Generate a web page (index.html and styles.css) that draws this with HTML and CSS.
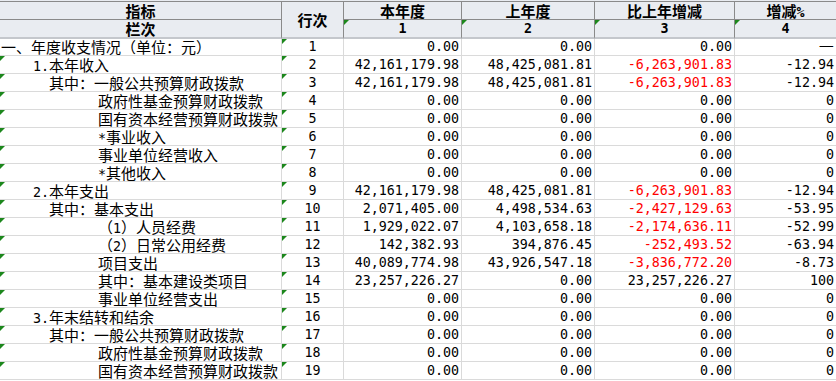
FILE: index.html
```html
<!DOCTYPE html>
<html lang="zh-CN">
<head>
<meta charset="utf-8">
<title>收入支出决算表</title>
<link rel="stylesheet" href="styles.css">
</head>
<body>
<div class="sheet">
<table class="grid">
<colgroup><col class="c-name"><col class="c-no"><col class="c-cur"><col class="c-prev"><col class="c-diff"><col class="c-pct"></colgroup>
<thead>
<tr class="h1"><th>指标</th><th class="hno" rowspan="2">行次</th><th>本年度</th><th>上年度</th><th>比上年增减</th><th class="last">增减<span class="a">%</span></th></tr>
<tr class="h2"><th>栏次</th><th class="t hd">1</th><th class="t hd">2</th><th class="t hd">3</th><th class="t hd last">4</th></tr>
</thead>
<tbody>
<tr class="first"><td class="lbl l0">一、年度收支情况（单位：元）</td><td class="no t">1</td><td class="num">0.00</td><td class="num">0.00</td><td class="num">0.00</td><td class="num last"><span class="dash">—</span></td></tr>
<tr><td class="lbl l1 t"><span class="a">1.</span>本年收入</td><td class="no t">2</td><td class="num">42,161,179.98</td><td class="num">48,425,081.81</td><td class="num neg">-6,263,901.83</td><td class="num last">-12.94</td></tr>
<tr><td class="lbl l2 t">其中：一般公共预算财政拨款</td><td class="no t">3</td><td class="num">42,161,179.98</td><td class="num">48,425,081.81</td><td class="num neg">-6,263,901.83</td><td class="num last">-12.94</td></tr>
<tr><td class="lbl l3 t">政府性基金预算财政拨款</td><td class="no t">4</td><td class="num">0.00</td><td class="num">0.00</td><td class="num">0.00</td><td class="num last">0</td></tr>
<tr><td class="lbl l3 t">国有资本经营预算财政拨款</td><td class="no t">5</td><td class="num">0.00</td><td class="num">0.00</td><td class="num">0.00</td><td class="num last">0</td></tr>
<tr><td class="lbl l3 t"><span class="a">*</span>事业收入</td><td class="no t">6</td><td class="num">0.00</td><td class="num">0.00</td><td class="num">0.00</td><td class="num last">0</td></tr>
<tr><td class="lbl l3 t">事业单位经营收入</td><td class="no t">7</td><td class="num">0.00</td><td class="num">0.00</td><td class="num">0.00</td><td class="num last">0</td></tr>
<tr><td class="lbl l3 t"><span class="a">*</span>其他收入</td><td class="no t">8</td><td class="num">0.00</td><td class="num">0.00</td><td class="num">0.00</td><td class="num last">0</td></tr>
<tr><td class="lbl l1 t"><span class="a">2.</span>本年支出</td><td class="no t">9</td><td class="num">42,161,179.98</td><td class="num">48,425,081.81</td><td class="num neg">-6,263,901.83</td><td class="num last">-12.94</td></tr>
<tr><td class="lbl l2 t">其中：基本支出</td><td class="no t">10</td><td class="num">2,071,405.00</td><td class="num">4,498,534.63</td><td class="num neg">-2,427,129.63</td><td class="num last">-53.95</td></tr>
<tr><td class="lbl l3 t">（<span class="a">1</span>）人员经费</td><td class="no t">11</td><td class="num">1,929,022.07</td><td class="num">4,103,658.18</td><td class="num neg">-2,174,636.11</td><td class="num last">-52.99</td></tr>
<tr><td class="lbl l3 t">（<span class="a">2</span>）日常公用经费</td><td class="no t">12</td><td class="num">142,382.93</td><td class="num">394,876.45</td><td class="num neg">-252,493.52</td><td class="num last">-63.94</td></tr>
<tr><td class="lbl l3 t">项目支出</td><td class="no t">13</td><td class="num">40,089,774.98</td><td class="num">43,926,547.18</td><td class="num neg">-3,836,772.20</td><td class="num last">-8.73</td></tr>
<tr><td class="lbl l3 t">其中：基本建设类项目</td><td class="no t">14</td><td class="num">23,257,226.27</td><td class="num">0.00</td><td class="num">23,257,226.27</td><td class="num last">100</td></tr>
<tr><td class="lbl l3 t">事业单位经营支出</td><td class="no t">15</td><td class="num">0.00</td><td class="num">0.00</td><td class="num">0.00</td><td class="num last">0</td></tr>
<tr><td class="lbl l1 t"><span class="a">3.</span>年末结转和结余</td><td class="no t">16</td><td class="num">0.00</td><td class="num">0.00</td><td class="num">0.00</td><td class="num last">0</td></tr>
<tr><td class="lbl l2 t">其中：一般公共预算财政拨款</td><td class="no t">17</td><td class="num">0.00</td><td class="num">0.00</td><td class="num">0.00</td><td class="num last">0</td></tr>
<tr><td class="lbl l3 t">政府性基金预算财政拨款</td><td class="no t">18</td><td class="num">0.00</td><td class="num">0.00</td><td class="num">0.00</td><td class="num last">0</td></tr>
<tr><td class="lbl l3 t">国有资本经营预算财政拨款</td><td class="no t">19</td><td class="num">0.00</td><td class="num">0.00</td><td class="num">0.00</td><td class="num last">0</td></tr>
</tbody>
</table>
</div>
</body>
</html>
```

FILE: styles.css
```css
html, body {
  margin: 0;
  padding: 0;
  background: #ffffff;
}
body {
  width: 836px;
  height: 381px;
  overflow: hidden;
  font-family: "Noto Sans CJK SC", "Noto Sans", sans-serif;
  font-size: 15px;
  color: #000000;
}
.sheet {
  border-top: 1px solid #e9ecf1;
}
.grid {
  border-collapse: separate;
  border-spacing: 0;
  table-layout: fixed;
  width: 836px;
}
.c-name { width: 282px; }
.c-no { width: 62px; }
.c-cur { width: 118px; }
.c-prev { width: 133px; }
.c-diff { width: 140px; }
.c-pct { width: 101px; }

.grid th {
  background: #e9ecf1;
  border-right: 1px solid #8a8a8a;
  border-bottom: 1px solid #8a8a8a;
  padding: 0;
  height: 17px;
  line-height: 17px;
  font-weight: bold;
  text-align: center;
  white-space: nowrap;
}
.h1 th {
  border-top: 1px solid #8a8a8a;
}
.h2 th,
.grid th.hno {
  border-bottom: 2px solid #c4c7cc;
}
.grid th.hd {
  font-family: "DejaVu Sans Mono", monospace;
  font-size: 13.33px;
}
.grid td {
  border-right: 1px solid #dadada;
  border-bottom: 1px solid #dadada;
  padding: 0;
  height: 17px;
  line-height: 17px;
  white-space: nowrap;
}
.grid tr.first td {
  height: 16px;
  line-height: 16px;
}
.grid .last {
  border-right: none;
}
.a {
  font-family: "DejaVu Sans Mono", monospace;
  font-size: 13.33px;
  line-height: 0;
}
.num {
  text-align: right;
  padding-right: 2px !important;
  font-family: "DejaVu Sans Mono", monospace;
  font-size: 13.33px;
}
.no {
  text-align: center;
  font-family: "DejaVu Sans Mono", monospace;
  font-size: 13.33px;
}
.neg {
  color: #ff0000;
}
.dash {
  font-family: "Noto Sans CJK SC", sans-serif;
  font-size: 17px;
  line-height: 0;
}
.lbl { text-align: left; }
.l0 { padding-left: 1px !important; }
.l1 { padding-left: 33px !important; }
.l2 { padding-left: 49px !important; }
.l3 { padding-left: 98px !important; }

.t {
  position: relative;
}
.t::before {
  content: "";
  position: absolute;
  left: 0;
  top: 0;
  width: 0;
  height: 0;
  border-top: 5px solid #1c871c;
  border-right: 5px solid transparent;
}
```
